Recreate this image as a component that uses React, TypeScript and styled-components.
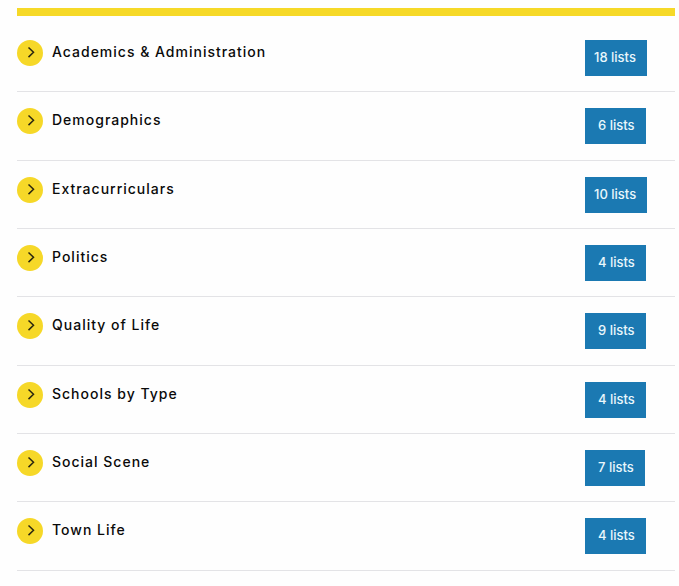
import React from 'react';
import styled, { createGlobalStyle } from 'styled-components';

const GlobalStyle = createGlobalStyle`
  *, *::before, *::after { box-sizing: border-box; }
  body {
    margin: 0;
    background: #fefefe;
    color: #0a0a0a;
    font-family: Inter, "Liberation Sans", sans-serif;
  }
`;

const Page = styled.main`
  padding: 8px 4px 15px 17px;
`;

const List = styled.ul`
  margin: 0;
  padding: 8px 0 0;
  border-top: 8px solid #f6d928;
  list-style: none;
`;

const Row = styled.li`
  min-height: 68px;
  border-bottom: 1px solid #e3e3e6;

  &:nth-child(3n + 2) { min-height: 69px; }
`;

const RowButton = styled.button`
  display: flex;
  align-items: flex-start;
  gap: 9px;
  width: 100%;
  padding: 16px 0 15px;
  border: 0;
  background: none;
  color: inherit;
  font: inherit;
  text-align: left;
  cursor: pointer;
`;

const Disc = styled.span`
  display: flex;
  flex: none;
  align-items: center;
  justify-content: center;
  width: 26px;
  height: 26px;
  border-radius: 50%;
  background: #f6d828;
`;

const Label = styled.span`
  flex: 1;
  font-size: 14px;
  font-weight: 500;
  line-height: 23px;
  letter-spacing: 1px;
`;

const BadgeColumn = styled.span`
  display: flex;
  flex: none;
  width: 90px;
`;

const Badge = styled.span<{ $short: boolean }>`
  padding: 7px 11px 9px ${({ $short }) => ($short ? 13 : 9)}px;
  background: #1b79b2;
  color: #e9f7fc;
  font-size: 13px;
  font-weight: 500;
  line-height: 20px;
  white-space: nowrap;
`;

const categories = [
  { name: 'Academics & Administration', count: 18 },
  { name: 'Demographics', count: 6 },
  { name: 'Extracurriculars', count: 10 },
  { name: 'Politics', count: 4 },
  { name: 'Quality of Life', count: 9 },
  { name: 'Schools by Type', count: 4 },
  { name: 'Social Scene', count: 7 },
  { name: 'Town Life', count: 4 },
];

function Chevron() {
  return (
    <svg width="26" height="26" viewBox="0 0 26 26" fill="none" aria-hidden="true">
      <path d="M11.5 7.5L16.5 12.3L11.5 17.1" stroke="#2b2710" strokeWidth="1.5" />
    </svg>
  );
}

export default function App() {
  return (
    <>
      <GlobalStyle />
      <Page>
        <List>
          {categories.map(({ name, count }) => (
            <Row key={name}>
              <RowButton type="button" aria-expanded={false}>
                <Disc><Chevron /></Disc>
                <Label>{name}</Label>
                <BadgeColumn>
                  <Badge $short={count < 10}>{count} lists</Badge>
                </BadgeColumn>
              </RowButton>
            </Row>
          ))}
        </List>
      </Page>
    </>
  );
}
